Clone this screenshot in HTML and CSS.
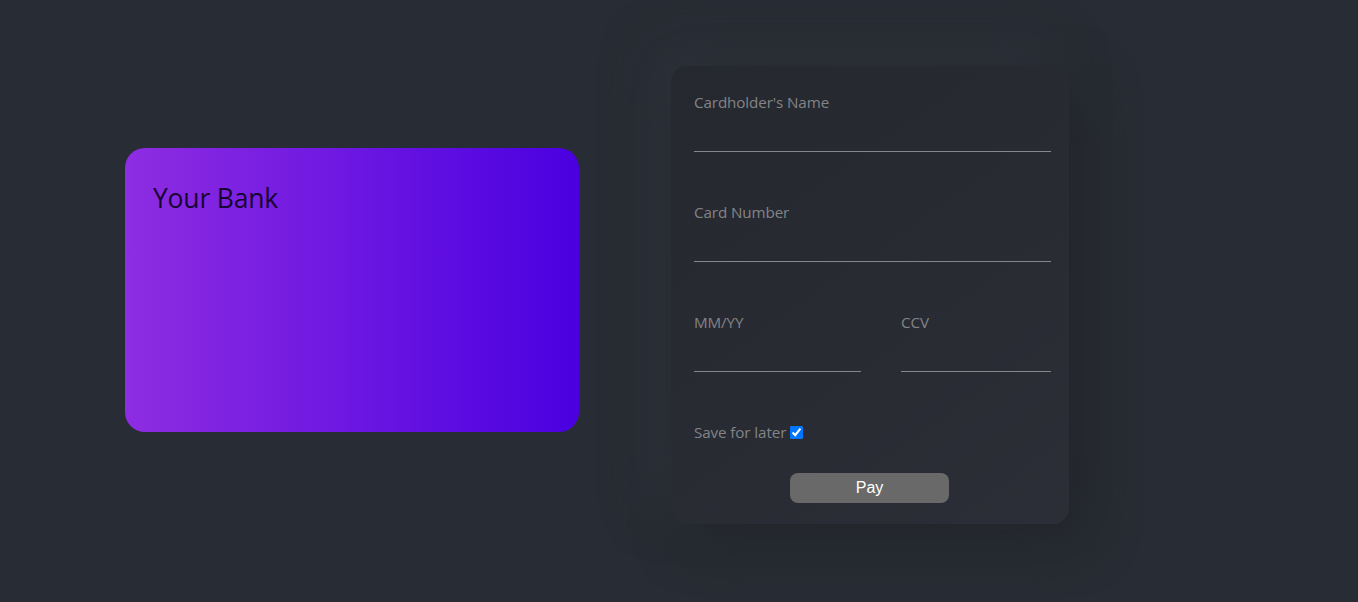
FILE: index.html
```html
<!DOCTYPE html>
<html lang="en">
<head>
<meta charset="utf-8">
<title>Payment</title>
<link rel="stylesheet" href="styles.css">
</head>
<body>
<main class="page">
  <section class="bank-card">
    <h1 class="bank-name">Your Bank</h1>
  </section>
  <form class="pay-form">
    <div class="field">
      <label class="label" for="name">Cardholder's Name</label>
      <input class="input" id="name" type="text">
    </div>
    <div class="field">
      <label class="label" for="number">Card Number</label>
      <input class="input" id="number" type="text">
    </div>
    <div class="field row">
      <div class="col col-date">
        <label class="label" for="exp">MM/YY</label>
        <input class="input" id="exp" type="text">
      </div>
      <div class="col col-ccv">
        <label class="label" for="ccv">CCV</label>
        <input class="input" id="ccv" type="text">
      </div>
    </div>
    <div class="save">
      <label class="label" for="save">Save for later</label><input class="check" id="save" type="checkbox" checked>
    </div>
    <div class="actions">
      <button class="pay" type="button">Pay</button>
    </div>
  </form>
</main>
</body>
</html>
```

FILE: styles.css
```css
html, body {
  margin: 0;
  padding: 0;
  background: #282c34;
  height: 100%;
}

.page {
  display: flex;
  align-items: flex-start;
  padding-left: 125px;
  gap: 92px;
  font-family: "Open Sans", "Noto Sans", sans-serif;
}

.bank-card {
  margin-top: 148px;
  width: 454px;
  height: 284px;
  box-sizing: border-box;
  border-radius: 20px;
  background: linear-gradient(to right, #8e2de2, #4a00e0);
  padding: 30px 28px;
}

.bank-name {
  margin: 0;
  font-weight: 400;
  font-size: 26.5px;
  line-height: 40px;
  color: #170532;
  letter-spacing: -0.2px;
}

.pay-form {
  margin-top: 66px;
  width: 398px;
  box-sizing: border-box;
  padding: 26px 18px 21px 23px;
  border-radius: 16px;
  background: linear-gradient(145deg, #25282f, #2b2e36);
  box-shadow: 16px 16px 50px #22252a, -16px -16px 50px #2f333c;
  display: flex;
  flex-direction: column;
}

.field {
  display: flex;
  flex-direction: column;
  margin-bottom: 50px;
}

.row {
  flex-direction: row;
  gap: 40px;
}

.col {
  display: flex;
  flex-direction: column;
}

.col-date { width: 167px; }
.col-ccv { width: 150px; }

.label {
  font-size: 15.2px;
  line-height: 20px;
  height: 20px;
  color: #838487;
  letter-spacing: -0.1px;
}

.input {
  display: block;
  box-sizing: border-box;
  width: 100%;
  height: 40px;
  margin: 0;
  padding: 0;
  border: none;
  border-bottom: 1px solid #85878b;
  background: transparent;
  outline: none;
  color: #cfcfcf;
  font: inherit;
}

.save {
  display: flex;
  align-items: center;
  height: 20px;
}

.check {
  width: 13px;
  height: 13px;
  margin: 1px 0 0 4px;
}

.actions {
  display: flex;
  justify-content: center;
  margin-top: 31px;
  padding-right: 6px;
}

.pay {
  width: 159px;
  height: 30px;
  border: none;
  border-radius: 8px;
  background: #696969;
  color: #ffffff;
  font-family: "Liberation Sans", Arial, sans-serif;
  font-size: 16px;
  padding: 0;
}
```
